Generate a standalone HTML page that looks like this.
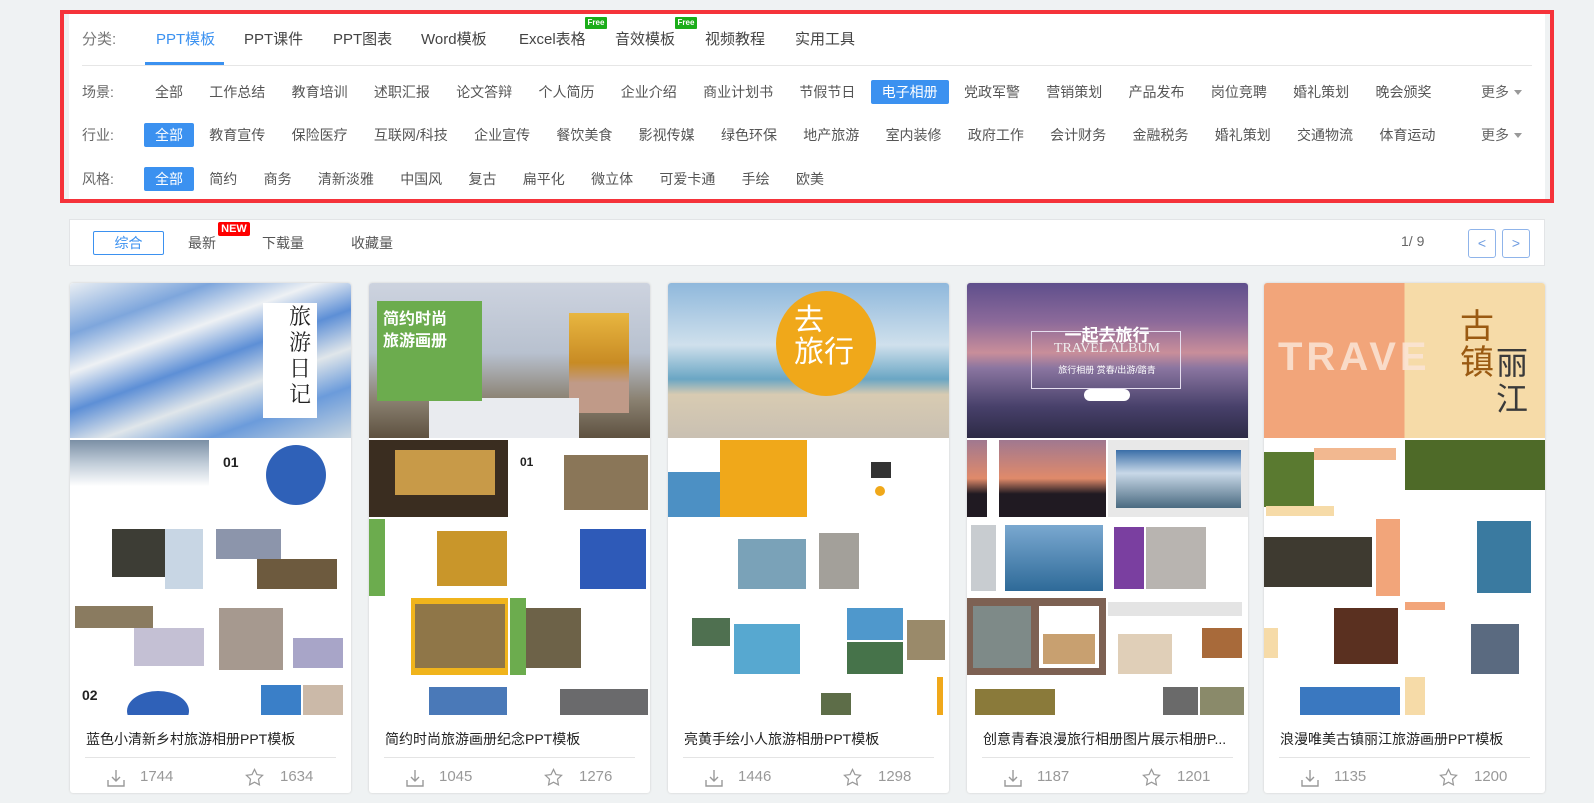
<!DOCTYPE html>
<html><head><meta charset="utf-8">
<style>
*{margin:0;padding:0;box-sizing:border-box}
body{width:1594px;height:803px;background:#eff2f3;font-family:"Liberation Sans","Noto Sans CJK SC",sans-serif;position:relative;overflow:hidden;color:#555}
.red{position:absolute;left:60px;top:10px;width:1494px;height:193px;border:4px solid #f5333a}
.panel{position:absolute;left:69px;top:14px;width:1476px;height:185px;background:#fff}
.tab{position:absolute;top:28px;font-size:15px;color:#444;white-space:nowrap}
.free{position:absolute;top:17px;width:22px;height:12px;background:#1aad19;color:#fff;font-size:8px;font-weight:bold;text-align:center;line-height:12px;border-radius:1px}
.row{position:absolute;left:82px;height:26px;display:flex;align-items:center;font-size:14px}
.row .lab{width:62px;color:#666}
.row span.i{padding:0 11px;margin-right:4.3px;line-height:24px;color:#555;border-radius:2px;white-space:nowrap}
.row span.on{background:#3b91f0;color:#fff}
.more{position:absolute;font-size:14px;color:#666}
.more:after{content:"";display:inline-block;margin-left:5px;border:4px solid transparent;border-top:5px solid #999;vertical-align:-2px}
.sort{position:absolute;left:69px;top:219px;width:1476px;height:47px;background:#fff;border:1px solid #e2e4e6}
.card{position:absolute;top:283px;width:281px;height:510px;background:#fff;border-radius:3px;box-shadow:0 0 2px #ccc;overflow:hidden}
.img{position:absolute;left:0;top:0;width:281px;height:432px;background:#fff}
.top{position:absolute;left:0;top:0;width:281px;height:155px}
.g{position:absolute;background:#f4f5f6;overflow:hidden}
.ttl{position:absolute;left:16px;top:446px;font-size:14px;color:#222;white-space:nowrap}
.hr{position:absolute;left:15px;right:15px;top:474px;height:1px;background:#e4e4e4}
.st{position:absolute;top:485px;font-size:15px;color:#999}
svg{position:absolute}
</style></head><body>
<div class="red"></div>
<div class="panel"></div>
<div class="tab" style="left:82px;color:#777">分类:</div>
<div class="tab" style="left:156px;color:#3b91f0">PPT模板</div>
<div style="position:absolute;left:145px;top:62px;width:79px;height:3px;background:#3b91f0"></div>
<div class="tab" style="left:244px">PPT课件</div>
<div class="tab" style="left:333px">PPT图表</div>
<div class="tab" style="left:421px">Word模板</div>
<div class="tab" style="left:519px">Excel表格</div>
<div class="free" style="left:585px">Free</div>
<div class="tab" style="left:615px">音效模板</div>
<div class="free" style="left:675px">Free</div>
<div class="tab" style="left:705px">视频教程</div>
<div class="tab" style="left:795px">实用工具</div>
<div style="position:absolute;left:82px;top:65px;width:1450px;height:1px;background:#e6e6e6"></div>

<div class="row" style="top:79px"><span class="lab">场景:</span><span class="i">全部</span><span class="i">工作总结</span><span class="i">教育培训</span><span class="i">述职汇报</span><span class="i">论文答辩</span><span class="i">个人简历</span><span class="i">企业介绍</span><span class="i">商业计划书</span><span class="i">节假节日</span><span class="i on">电子相册</span><span class="i">党政军警</span><span class="i">营销策划</span><span class="i">产品发布</span><span class="i">岗位竞聘</span><span class="i">婚礼策划</span><span class="i">晚会颁奖</span></div>
<div class="more" style="left:1481px;top:82px">更多</div>
<div class="row" style="top:122px"><span class="lab">行业:</span><span class="i on">全部</span><span class="i">教育宣传</span><span class="i">保险医疗</span><span class="i">互联网/科技</span><span class="i">企业宣传</span><span class="i">餐饮美食</span><span class="i">影视传媒</span><span class="i">绿色环保</span><span class="i">地产旅游</span><span class="i">室内装修</span><span class="i">政府工作</span><span class="i">会计财务</span><span class="i">金融税务</span><span class="i">婚礼策划</span><span class="i">交通物流</span><span class="i">体育运动</span></div>
<div class="more" style="left:1481px;top:125px">更多</div>
<div class="row" style="top:166px"><span class="lab">风格:</span><span class="i on">全部</span><span class="i">简约</span><span class="i">商务</span><span class="i">清新淡雅</span><span class="i">中国风</span><span class="i">复古</span><span class="i">扁平化</span><span class="i">微立体</span><span class="i">可爱卡通</span><span class="i">手绘</span><span class="i">欧美</span></div>

<div class="sort"></div>
<div style="position:absolute;left:93px;top:231px;width:71px;height:24px;border:1px solid #3b91f0;border-radius:2px;color:#3b91f0;font-size:14px;text-align:center;line-height:22px">综合</div>
<div style="position:absolute;left:188px;top:233px;font-size:14px;color:#555">最新</div>
<div style="position:absolute;left:218px;top:222px;width:32px;height:14px;background:#f00;color:#fff;font-size:11px;font-weight:bold;text-align:center;line-height:14px;border-radius:2px">NEW</div>
<div style="position:absolute;left:262px;top:233px;font-size:14px;color:#555">下载量</div>
<div style="position:absolute;left:351px;top:233px;font-size:14px;color:#555">收藏量</div>
<div style="position:absolute;left:1401px;top:233px;font-size:14px;color:#666">1/ 9</div>
<div style="position:absolute;left:1468px;top:229px;width:28px;height:29px;border:1px solid #8fb4ea;border-radius:3px;color:#6d9be0;text-align:center;line-height:26px;font-size:14px">&lt;</div>
<div style="position:absolute;left:1502px;top:229px;width:28px;height:29px;border:1px solid #8fb4ea;border-radius:3px;color:#6d9be0;text-align:center;line-height:26px;font-size:14px">&gt;</div>

<!-- card 1 -->
<div class="card" style="left:70px">
 <div class="img">
  <div class="top" style="background:linear-gradient(160deg,#e9eef3 0,#7ea6dc 20%,#eef1f4 35%,#5d8fd6 50%,#e0e6ea 65%,#6b9bdb 80%,#c9d6e0 100%)"></div>
  <div style="position:absolute;left:193px;top:20px;width:54px;height:115px;background:#fff;font-size:22px;color:#222;line-height:26px;text-align:right;padding-right:6px;font-family:'Noto Serif CJK SC',serif">旅<br>游<br>日<br>记</div>
  <div class="g" style="left:0;top:157px;width:139px;height:77px;background:linear-gradient(#7b8fa5 0,#c0ccd8 30%,#fff 60%)"></div>
  <div class="g" style="left:141px;top:157px;width:140px;height:77px;background:#fff"><div style="position:absolute;left:55px;top:5px;width:60px;height:60px;border-radius:50%;background:#2f61b8"></div><div style="position:absolute;left:12px;top:14px;font-size:14px;font-weight:bold;color:#222">01</div></div>
  <div class="g" style="left:0;top:236px;width:139px;height:77px;background:#fff"><div style="position:absolute;left:42px;top:10px;width:58px;height:48px;background:#3d3d35"></div><div style="position:absolute;left:95px;top:10px;width:38px;height:60px;background:#c8d6e4"></div></div>
  <div class="g" style="left:141px;top:236px;width:140px;height:77px;background:#fff"><div style="position:absolute;left:5px;top:10px;width:65px;height:30px;background:#8c95ab"></div><div style="position:absolute;left:46px;top:40px;width:80px;height:30px;background:#6d5a3e"></div></div>
  <div class="g" style="left:0;top:315px;width:139px;height:77px;background:#fff"><div style="position:absolute;left:5px;top:8px;width:78px;height:22px;background:#8a7b60"></div><div style="position:absolute;left:64px;top:30px;width:70px;height:38px;background:#c4c0d4"></div></div>
  <div class="g" style="left:141px;top:315px;width:140px;height:77px;background:#fff"><div style="position:absolute;left:8px;top:10px;width:64px;height:62px;background:#a6998f"></div><div style="position:absolute;left:82px;top:40px;width:50px;height:30px;background:#a8a5c8"></div></div>
  <div class="g" style="left:0;top:394px;width:139px;height:38px;background:#fff"><div style="position:absolute;left:57px;top:14px;width:62px;height:40px;border-radius:50%;background:#2f61b8"></div><div style="position:absolute;left:12px;top:10px;font-size:14px;font-weight:bold;color:#222">02</div></div>
  <div class="g" style="left:141px;top:394px;width:140px;height:38px;background:#fff"><div style="position:absolute;left:50px;top:8px;width:40px;height:30px;background:#3a7fc8"></div><div style="position:absolute;left:92px;top:8px;width:40px;height:30px;background:#cbb9a8"></div></div>
 </div>
 <div class="ttl">蓝色小清新乡村旅游相册PPT模板</div><div class="hr"></div>
 <svg style="left:37px;top:486px" width="18" height="18" viewBox="0 0 18 18" fill="none" stroke="#999" stroke-width="1.4"><path d="M9 1v11M5 8l4 4 4-4M1 11v6h16v-6"/></svg><div class="st" style="left:70px">1744</div>
 <svg style="left:175px;top:485px" width="19" height="19" viewBox="0 0 20 20" fill="none" stroke="#999" stroke-width="1.3"><path d="M10 1.5l2.6 5.4 5.9.8-4.3 4.1 1 5.9-5.2-2.8-5.2 2.8 1-5.9-4.3-4.1 5.9-.8z"/></svg><div class="st" style="left:210px">1634</div>
</div>

<!-- card 2 -->
<div class="card" style="left:369px">
 <div class="img">
  <div class="top" style="background:linear-gradient(180deg,#cdd3df 0,#b8c1cf 45%,#8b8272 75%,#5e5140 100%)"></div>
  <div style="position:absolute;left:200px;top:30px;width:60px;height:100px;background:linear-gradient(#e8b640,#c88b24 50%,#c09a88 70%)"></div>
  <div style="position:absolute;left:60px;top:115px;width:150px;height:40px;background:#e9ebef"></div>
  <div style="position:absolute;left:8px;top:18px;width:105px;height:100px;background:#6cac4e;color:#fff;font-size:16px;font-weight:bold;padding:8px 6px;line-height:22px">简约时尚<br>旅游画册</div>
  <div class="g" style="left:0;top:157px;width:139px;height:77px;background:#3a2d20"><div style="position:absolute;left:26px;top:10px;width:100px;height:45px;background:#c89a48"></div></div>
  <div class="g" style="left:141px;top:157px;width:140px;height:77px;background:#fff"><div style="position:absolute;left:54px;top:15px;width:84px;height:55px;background:#8a7658"></div><div style="position:absolute;left:10px;top:15px;font-size:12px;font-weight:bold;color:#222">01</div></div>
  <div class="g" style="left:0;top:236px;width:139px;height:77px;background:#fff"><div style="position:absolute;left:0;top:0;width:16px;height:77px;background:#6cac4e"></div><div style="position:absolute;left:68px;top:12px;width:70px;height:55px;background:#c9962a"></div></div>
  <div class="g" style="left:141px;top:236px;width:140px;height:77px;background:#fff"><div style="position:absolute;left:70px;top:10px;width:66px;height:60px;background:#2e5ab8"></div></div>
  <div class="g" style="left:0;top:315px;width:139px;height:77px;background:#fff"><div style="position:absolute;left:42px;top:0;width:97px;height:77px;background:#f0b41c"></div><div style="position:absolute;left:46px;top:6px;width:90px;height:64px;background:#8f7648"></div></div>
  <div class="g" style="left:141px;top:315px;width:140px;height:77px;background:#fff"><div style="position:absolute;left:0;top:0;width:16px;height:77px;background:#6cac4e"></div><div style="position:absolute;left:16px;top:10px;width:55px;height:60px;background:#6d6248"></div></div>
  <div class="g" style="left:0;top:394px;width:139px;height:38px;background:#fff"><div style="position:absolute;left:60px;top:10px;width:78px;height:30px;background:#4a79b8"></div></div>
  <div class="g" style="left:141px;top:394px;width:140px;height:38px;background:#fff"><div style="position:absolute;left:50px;top:12px;width:88px;height:28px;background:#6a6a6c"></div></div>
 </div>
 <div class="ttl">简约时尚旅游画册纪念PPT模板</div><div class="hr"></div>
 <svg style="left:37px;top:486px" width="18" height="18" viewBox="0 0 18 18" fill="none" stroke="#999" stroke-width="1.4"><path d="M9 1v11M5 8l4 4 4-4M1 11v6h16v-6"/></svg><div class="st" style="left:70px">1045</div>
 <svg style="left:175px;top:485px" width="19" height="19" viewBox="0 0 20 20" fill="none" stroke="#999" stroke-width="1.3"><path d="M10 1.5l2.6 5.4 5.9.8-4.3 4.1 1 5.9-5.2-2.8-5.2 2.8 1-5.9-4.3-4.1 5.9-.8z"/></svg><div class="st" style="left:210px">1276</div>
</div>

<!-- card 3 -->
<div class="card" style="left:668px">
 <div class="img">
  <div class="top" style="background:linear-gradient(180deg,#8fb8dc 0,#cfe0ec 40%,#6aa6c4 62%,#d8cbb2 72%,#c9c0b2 100%)"></div>
  <div style="position:absolute;left:108px;top:8px;width:100px;height:105px;border-radius:50%;background:#f0a81a;color:#fff;font-size:30px;line-height:32px;padding:14px 0 0 18px">去<br>旅行</div>
  <div class="g" style="left:0;top:157px;width:139px;height:77px;background:#fff"><div style="position:absolute;left:52px;top:0;width:87px;height:77px;background:#f0a81a"></div><div style="position:absolute;left:0;top:32px;width:52px;height:45px;background:#4c90c4"></div></div>
  <div class="g" style="left:141px;top:157px;width:140px;height:77px;background:#fff"><div style="position:absolute;left:62px;top:22px;width:20px;height:16px;background:#333"></div><div style="position:absolute;left:66px;top:46px;width:10px;height:10px;border-radius:50%;background:#f0a81a"></div></div>
  <div class="g" style="left:0;top:236px;width:139px;height:77px;background:#fff"><div style="position:absolute;left:70px;top:20px;width:68px;height:50px;background:#7aa2b8"></div></div>
  <div class="g" style="left:141px;top:236px;width:140px;height:77px;background:#fff"><div style="position:absolute;left:10px;top:14px;width:40px;height:56px;background:#a3a09a"></div></div>
  <div class="g" style="left:0;top:315px;width:139px;height:77px;background:#fff"><div style="position:absolute;left:24px;top:20px;width:38px;height:28px;background:#4f7050"></div><div style="position:absolute;left:66px;top:26px;width:66px;height:50px;background:#57a8d0"></div></div>
  <div class="g" style="left:141px;top:315px;width:140px;height:77px;background:#fff"><div style="position:absolute;left:38px;top:10px;width:56px;height:32px;background:#4f98cc"></div><div style="position:absolute;left:38px;top:44px;width:56px;height:32px;background:#46734a"></div><div style="position:absolute;left:98px;top:22px;width:38px;height:40px;background:#9a8a6a"></div></div>
  <div class="g" style="left:0;top:394px;width:139px;height:38px;background:#fff"></div>
  <div class="g" style="left:141px;top:394px;width:140px;height:38px;background:#fff"><div style="position:absolute;left:12px;top:16px;width:30px;height:22px;background:#5d6d48"></div><div style="position:absolute;left:128px;top:0;width:6px;height:38px;background:#f0a81a"></div></div>
 </div>
 <div class="ttl">亮黄手绘小人旅游相册PPT模板</div><div class="hr"></div>
 <svg style="left:37px;top:486px" width="18" height="18" viewBox="0 0 18 18" fill="none" stroke="#999" stroke-width="1.4"><path d="M9 1v11M5 8l4 4 4-4M1 11v6h16v-6"/></svg><div class="st" style="left:70px">1446</div>
 <svg style="left:175px;top:485px" width="19" height="19" viewBox="0 0 20 20" fill="none" stroke="#999" stroke-width="1.3"><path d="M10 1.5l2.6 5.4 5.9.8-4.3 4.1 1 5.9-5.2-2.8-5.2 2.8 1-5.9-4.3-4.1 5.9-.8z"/></svg><div class="st" style="left:210px">1298</div>
</div>

<!-- card 4 -->
<div class="card" style="left:967px">
 <div class="img">
  <div class="top" style="background:linear-gradient(180deg,#5f4f8c 0,#8c6a9a 25%,#c98e9a 45%,#8a75a0 55%,#47406a 80%,#2d2a45 100%)"></div>
  <div style="position:absolute;left:64px;top:48px;width:150px;height:58px;border:1px solid #e6dff0"></div>
  <div style="position:absolute;left:70px;top:38px;width:140px;text-align:center;color:#fff;font-size:17px;font-weight:bold">一起去旅行</div>
  <div style="position:absolute;left:60px;top:58px;width:160px;text-align:center;color:#eee;font-size:14px;font-family:'Liberation Serif',serif">TRAVEL ALBUM</div>
  <div style="position:absolute;left:70px;top:80px;width:140px;text-align:center;color:#fff;font-size:9px">旅行相册 赏春/出游/踏青</div>
  <div style="position:absolute;left:117px;top:106px;width:46px;height:12px;border-radius:6px;background:#fff"></div>
  <div class="g" style="left:0;top:157px;width:139px;height:77px;background:linear-gradient(#a07890,#e08a6a 50%,#201a22 70%)"><div style="position:absolute;left:20px;top:0;width:12px;height:77px;background:#fff"></div></div>
  <div class="g" style="left:141px;top:157px;width:140px;height:77px;background:#e8e8e8"><div style="position:absolute;left:8px;top:10px;width:125px;height:58px;background:linear-gradient(#3a6ea8,#c8d8e8 40%,#4a6a80)"></div></div>
  <div class="g" style="left:0;top:236px;width:139px;height:77px;background:#fff"><div style="position:absolute;left:4px;top:6px;width:25px;height:66px;background:#c8ccd0"></div><div style="position:absolute;left:38px;top:6px;width:98px;height:66px;background:linear-gradient(#7aa8d0,#2e6a98)"></div></div>
  <div class="g" style="left:141px;top:236px;width:140px;height:77px;background:#fff"><div style="position:absolute;left:6px;top:8px;width:30px;height:62px;background:#7a3fa0"></div><div style="position:absolute;left:38px;top:8px;width:60px;height:62px;background:#b8b4b0"></div></div>
  <div class="g" style="left:0;top:315px;width:139px;height:77px;background:#7d6153"><div style="position:absolute;left:6px;top:8px;width:58px;height:62px;background:#7e8a88"></div><div style="position:absolute;left:72px;top:8px;width:60px;height:62px;background:#fff"></div><div style="position:absolute;left:76px;top:36px;width:52px;height:30px;background:#c8a070"></div></div>
  <div class="g" style="left:141px;top:315px;width:140px;height:77px;background:#fff"><div style="position:absolute;left:0;top:4px;width:134px;height:14px;background:#e4e4e4"></div><div style="position:absolute;left:10px;top:36px;width:54px;height:40px;background:#e0cfb8"></div><div style="position:absolute;left:94px;top:30px;width:40px;height:30px;background:#a86a3a"></div></div>
  <div class="g" style="left:0;top:394px;width:139px;height:38px;background:#fff"><div style="position:absolute;left:8px;top:12px;width:80px;height:30px;background:#8a7a3a"></div></div>
  <div class="g" style="left:141px;top:394px;width:140px;height:38px;background:#fff"><div style="position:absolute;left:55px;top:10px;width:35px;height:30px;background:#6a6a6a"></div><div style="position:absolute;left:92px;top:10px;width:44px;height:30px;background:#8a8a6a"></div></div>
 </div>
 <div class="ttl">创意青春浪漫旅行相册图片展示相册P...</div><div class="hr"></div>
 <svg style="left:37px;top:486px" width="18" height="18" viewBox="0 0 18 18" fill="none" stroke="#999" stroke-width="1.4"><path d="M9 1v11M5 8l4 4 4-4M1 11v6h16v-6"/></svg><div class="st" style="left:70px">1187</div>
 <svg style="left:175px;top:485px" width="19" height="19" viewBox="0 0 20 20" fill="none" stroke="#999" stroke-width="1.3"><path d="M10 1.5l2.6 5.4 5.9.8-4.3 4.1 1 5.9-5.2-2.8-5.2 2.8 1-5.9-4.3-4.1 5.9-.8z"/></svg><div class="st" style="left:210px">1201</div>
</div>

<!-- card 5 -->
<div class="card" style="left:1264px">
 <div class="img">
  <div class="top" style="background:linear-gradient(90deg,#f2a57a 0,#f2a57a 50%,#f6dba8 50%)"></div>
  <div style="position:absolute;left:14px;top:52px;font-size:40px;font-weight:bold;color:#fbe5d6;letter-spacing:4px;opacity:.85">TRAVE</div>
  <div style="position:absolute;left:196px;top:26px;font-size:34px;color:#9a5a12;line-height:36px">古<br>镇</div>
  <div style="position:absolute;left:232px;top:62px;font-size:32px;color:#3a3a3a;line-height:36px">丽<br>江</div>
  <div class="g" style="left:0;top:157px;width:139px;height:77px;background:#fff"><div style="position:absolute;left:0;top:12px;width:50px;height:55px;background:#5a7a30"></div><div style="position:absolute;left:50px;top:8px;width:82px;height:12px;background:#f2b890"></div><div style="position:absolute;left:2px;top:66px;width:68px;height:10px;background:#f6dba8"></div></div>
  <div class="g" style="left:141px;top:157px;width:140px;height:77px;background:#fff"><div style="position:absolute;left:0;top:0;width:140px;height:50px;background:#4e6a28"></div></div>
  <div class="g" style="left:0;top:236px;width:139px;height:77px;background:#fff"><div style="position:absolute;left:0;top:18px;width:108px;height:50px;background:#3e3a30"></div><div style="position:absolute;left:112px;top:0;width:24px;height:77px;background:#f2a57a"></div></div>
  <div class="g" style="left:141px;top:236px;width:140px;height:77px;background:#fff"><div style="position:absolute;left:72px;top:2px;width:54px;height:72px;background:#3a7aa0"></div></div>
  <div class="g" style="left:0;top:315px;width:139px;height:77px;background:#fff"><div style="position:absolute;left:70px;top:10px;width:64px;height:56px;background:#5a3020"></div><div style="position:absolute;left:0;top:30px;width:14px;height:30px;background:#f6dba8"></div></div>
  <div class="g" style="left:141px;top:315px;width:140px;height:77px;background:#fff"><div style="position:absolute;left:66px;top:26px;width:48px;height:50px;background:#5a6a80"></div><div style="position:absolute;left:0;top:4px;width:40px;height:8px;background:#f2a57a"></div></div>
  <div class="g" style="left:0;top:394px;width:139px;height:38px;background:#fff"><div style="position:absolute;left:36px;top:10px;width:100px;height:30px;background:#3a78c0"></div></div>
  <div class="g" style="left:141px;top:394px;width:140px;height:38px;background:#fff"><div style="position:absolute;left:0;top:0;width:20px;height:38px;background:#f6dba8"></div></div>
 </div>
 <div class="ttl">浪漫唯美古镇丽江旅游画册PPT模板</div><div class="hr"></div>
 <svg style="left:37px;top:486px" width="18" height="18" viewBox="0 0 18 18" fill="none" stroke="#999" stroke-width="1.4"><path d="M9 1v11M5 8l4 4 4-4M1 11v6h16v-6"/></svg><div class="st" style="left:70px">1135</div>
 <svg style="left:175px;top:485px" width="19" height="19" viewBox="0 0 20 20" fill="none" stroke="#999" stroke-width="1.3"><path d="M10 1.5l2.6 5.4 5.9.8-4.3 4.1 1 5.9-5.2-2.8-5.2 2.8 1-5.9-4.3-4.1 5.9-.8z"/></svg><div class="st" style="left:210px">1200</div>
</div>
</body></html>
